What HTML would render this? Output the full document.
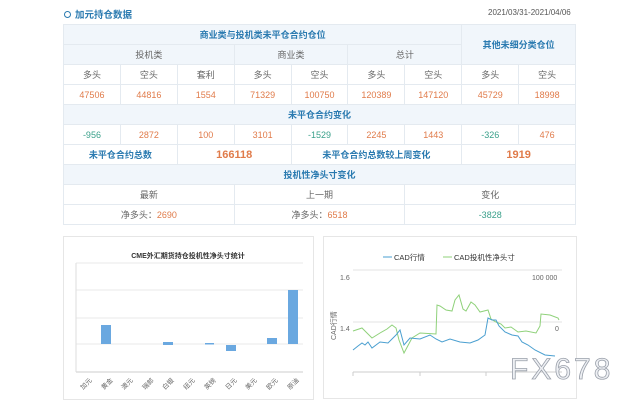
<!DOCTYPE html>
<html><head><meta charset="utf-8"><style>
body{margin:0;width:640px;height:400px;background:#fff;font-family:"Liberation Sans","Noto Sans CJK SC",sans-serif;position:relative;overflow:hidden}
.t{position:absolute;left:63px;top:24px;border-collapse:collapse;table-layout:fixed;width:512px;font-size:9px}
.t td{border:1px solid #e4eaf0;height:19px;padding:0;text-align:center;color:#666}
.h td{background:#f1f6fb}
.b{color:#2a7ab0!important;font-weight:bold}
.o{color:#e07b4a!important}
.g{color:#3aa08a!important}
.big{font-size:11px;font-weight:bold}
.panel{position:absolute;border:1px solid #e6e6e6;background:#fff}
</style></head><body>
<div style="position:absolute;left:64px;top:7px;font-size:9.5px;color:#2a7ab0;font-weight:bold"><span style="display:inline-block;width:5px;height:5px;border:1px solid #2a7ab0;border-radius:50%;margin-right:4px"></span>加元持仓数据</div>
<div style="position:absolute;left:488px;top:8px;font-size:8px;color:#555">2021/03/31-2021/04/06</div>
<table class="t">
<colgroup><col span="9" style="width:56.9px"></colgroup>
<tr class="h"><td colspan="7" class="b">商业类与投机类未平仓合约仓位</td><td colspan="2" rowspan="2" class="b">其他未细分类仓位</td></tr>
<tr class="h"><td colspan="3">投机类</td><td colspan="2">商业类</td><td colspan="2">总计</td></tr>
<tr><td>多头</td><td>空头</td><td>套利</td><td>多头</td><td>空头</td><td>多头</td><td>空头</td><td>多头</td><td>空头</td></tr>
<tr class="o"><td class="o">47506</td><td class="o">44816</td><td class="o">1554</td><td class="o">71329</td><td class="o">100750</td><td class="o">120389</td><td class="o">147120</td><td class="o">45729</td><td class="o">18998</td></tr>
<tr class="h"><td colspan="9" class="b">未平仓合约变化</td></tr>
<tr><td class="g">-956</td><td class="o">2872</td><td class="o">100</td><td class="o">3101</td><td class="g">-1529</td><td class="o">2245</td><td class="o">1443</td><td class="g">-326</td><td class="o">476</td></tr>
<tr><td colspan="2" class="b">未平仓合约总数</td><td colspan="2" class="o big">166118</td><td colspan="3" class="b">未平仓合约总数较上周变化</td><td colspan="2" class="o big">1919</td></tr>
<tr class="h"><td colspan="9" class="b">投机性净头寸变化</td></tr>
<tr><td colspan="3">最新</td><td colspan="3">上一期</td><td colspan="3">变化</td></tr>
<tr><td colspan="3">净多头：<span class="o">2690</span></td><td colspan="3">净多头：<span class="o">6518</span></td><td colspan="3" class="g">-3828</td></tr>
</table>
<div class="panel" style="left:63px;top:236px;width:249px;height:162px"></div>
<div class="panel" style="left:323px;top:236px;width:252px;height:161px"></div>
<svg style="position:absolute;left:0;top:0" width="640" height="400" font-family="Liberation Sans,Noto Sans CJK SC,sans-serif">
<text x="188" y="258" font-size="7" text-anchor="middle" fill="#333" font-weight="bold">CME外汇期货持仓投机性净头寸统计</text>
<g stroke="#e3e3e3" stroke-width="0.8"><line x1="76" y1="263" x2="303" y2="263"/><line x1="76" y1="290" x2="303" y2="290"/><line x1="76" y1="318" x2="303" y2="318"/><line x1="76" y1="344" x2="303" y2="344"/></g>
<line x1="76" y1="372" x2="303" y2="372" stroke="#ccc"/>
<line x1="76" y1="263" x2="76" y2="372" stroke="#ddd"/>
<g fill="#6aa8e0"><rect x="101" y="325" width="10" height="19"/><rect x="163" y="342" width="10" height="3"/><rect x="205" y="343" width="9" height="1.5"/><rect x="226" y="345" width="10" height="6"/><rect x="267" y="338" width="10" height="6"/><rect x="288" y="290" width="10" height="54"/></g>
<g font-size="6.5" fill="#666">
<text transform="translate(83,390) rotate(-45)">加元</text><text transform="translate(104,390) rotate(-45)">黄金</text><text transform="translate(124,390) rotate(-45)">澳元</text><text transform="translate(145,390) rotate(-45)">瑞郎</text><text transform="translate(165,390) rotate(-45)">白银</text><text transform="translate(186,390) rotate(-45)">纽元</text><text transform="translate(207,390) rotate(-45)">英镑</text><text transform="translate(228,390) rotate(-45)">日元</text><text transform="translate(248,390) rotate(-45)">美元</text><text transform="translate(269,390) rotate(-45)">欧元</text><text transform="translate(290,390) rotate(-45)">原油</text>
</g>
<line x1="383" y1="257" x2="392" y2="257" stroke="#4a9fd0"/><text x="394" y="260" font-size="7.5" fill="#333">CAD行情</text>
<line x1="443" y1="257" x2="452" y2="257" stroke="#8fd17a"/><text x="454" y="260" font-size="7.5" fill="#333">CAD投机性净头寸</text>
<line x1="353" y1="270" x2="562" y2="270" stroke="#e3e3e3"/><line x1="353" y1="322" x2="562" y2="322" stroke="#e3e3e3"/>
<line x1="353" y1="372" x2="562" y2="372" stroke="#ccc"/>
<g stroke="#ccc"><line x1="353" y1="372" x2="353" y2="376"/><line x1="420" y1="372" x2="420" y2="376"/><line x1="486" y1="372" x2="486" y2="376"/></g>
<text x="340" y="280" font-size="7" fill="#666">1.6</text><text x="340" y="331" font-size="7" fill="#666">1.4</text>
<text x="532" y="280" font-size="7" fill="#666">100 000</text><text x="555" y="331" font-size="7" fill="#666">0</text>
<text transform="translate(336,340) rotate(-90)" font-size="7" fill="#666">CAD行情</text>
<polyline fill="none" stroke="#8fd17a" stroke-width="1" points="353,331 362,328 366,332 372,338 380,333 387,329 392,325 396,328 399,340 404,353 412,338 420,333 436,334 437,305 440,306 446,310 452,311 455,300 459,295 463,309 466,311 471,302 475,305 480,312 488,310 491,319 496,322 501,324 505,328 511,327 518,332 526,331 536,333 540,326 541,314 550,315 558,318 559,320"/>
<polyline fill="none" stroke="#4a9fd0" stroke-width="1" points="353,350 358,346 362,343 365,345 368,342 372,348 380,342 388,343 396,335 400,330 404,345 410,338 420,339 430,335 436,339 442,342 450,339 460,342 470,343 478,340 485,335 488,318 492,320 496,320 499,326 505,332 512,335 518,336 522,342 528,345 535,350 545,355 555,356"/>
<text x="510" y="379" font-size="30" fill="#eef0f4" stroke="#9aa0aa" stroke-width="0.8" letter-spacing="3">FX678</text>
</svg>
</body></html>
